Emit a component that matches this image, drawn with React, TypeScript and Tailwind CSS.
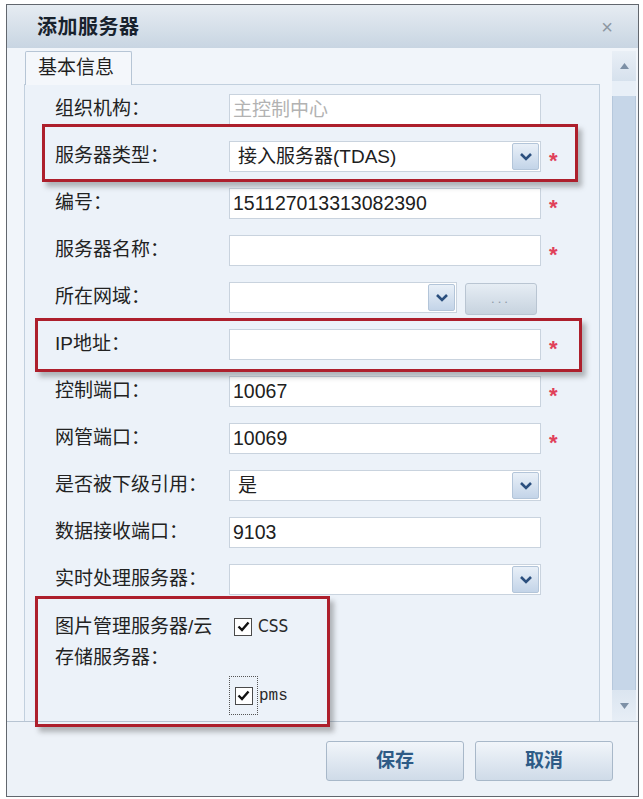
import React from "react";

type RowProps = {
  label: string;
  required?: boolean;
  children?: React.ReactNode;
  mark?: React.ReactNode;
};

const Chevron = () => (
  <svg width="14" height="10" viewBox="0 0 14 10">
    <path d="M2 2 L7 7 L12 2" fill="none" stroke="#2b4f7e" strokeWidth="2.6" />
  </svg>
);

const Check = () => (
  <svg width="13" height="11" viewBox="0 0 13 11">
    <path d="M1.5 5.5 L5 9 L11.5 1.5" fill="none" stroke="#111" strokeWidth="2.4" />
  </svg>
);

const Row = ({ label, required, children, mark }: RowProps) => (
  <div className="relative flex items-center h-[31px]">
    {mark}
    <div className="w-[204px] pl-[30px] shrink-0 text-[19px] text-[#222]">{label}</div>
    {children}
    {required && (
      <span className="ml-[8px] text-[22px] font-bold text-[#e0405a] leading-none mt-[8px]">*</span>
    )}
  </div>
);

const TextBox = ({ value, muted }: { value?: string; muted?: boolean }) => (
  <div
    className={
      muted
        ? "w-[312px] h-[31px] border border-[#c9d3de] bg-white pl-[3px] text-[19px] leading-[29px] text-[#b2b2b2]"
        : "w-[312px] h-[31px] border border-[#c9d3de] bg-white pl-[3px] text-[19.5px] leading-[29px] text-[#202020]"
    }
  >
    {value}
  </div>
);

const Select = ({ value, width = "w-[312px]" }: { value?: string; width?: string }) => (
  <div className={`${width} h-[31px] border border-[#c9d3de] bg-white flex`}>
    <div className="flex-1 pl-[8px] text-[19px] leading-[29px] text-[#202020]">{value}</div>
    <div className="w-[27px] my-[1px] mr-[1px] flex items-center justify-center bg-gradient-to-b from-[#e9f0f8] to-[#c3d4e8] border border-[#b3c5d9] rounded-[2px]">
      <Chevron />
    </div>
  </div>
);

const RedMark = ({ box }: { box: string }) => (
  <div className={`absolute ${box} border-[3px] border-[#ad1f2c] shadow-[4px_5px_5px_rgba(60,60,60,0.35)] pointer-events-none z-10`} />
);

export default function App() {
  return (
    <div className="w-[643px] h-[799px] bg-white pt-[4px] pl-[6px] font-['Liberation_Sans','Noto_Sans_CJK_SC',sans-serif]">
      <div className="w-[633px] h-[793px] border border-[#62676e] bg-[#f1f5fa] flex flex-col">
        {/* title bar */}
        <div className="h-[43px] shrink-0 flex items-center justify-between pl-[30px] pr-[25px] bg-gradient-to-b from-[#e6ecf2] to-[#c8d5e2]">
          <span className="text-[20px] font-bold text-[#18222d] tracking-[0.5px]">添加服务器</span>
          <span className="text-[20px] text-[#8d97a2] leading-none">×</span>
        </div>

        <div className="flex h-[673px] pt-[3px]">
          <div className="flex flex-col pl-[17px] w-[593px]">
            {/* tab strip */}
            <div className="h-[33px] flex items-end">
              <div className="ml-[1px] w-[107px] h-[34px] -mb-[1px] z-10 border border-b-0 border-[#b6c5d5] bg-[#f4f7fb] rounded-t-[2px] pl-[12px] text-[19px] leading-[32px] text-[#1f1f1f]">
                基本信息
              </div>
            </div>

            {/* form panel */}
            <div className="flex-1 border border-b-0 border-[#c2d0de] bg-[#ecf2f9] pt-[9px] flex flex-col gap-[16px]">
              <Row label="组织机构：">
                <TextBox value="主控制中心" muted />
              </Row>
              <Row
                label="服务器类型："
                required
                mark={<RedMark box="left-[17px] -top-[17px] w-[536px] h-[58px]" />}
              >
                <Select value="接入服务器(TDAS)" />
              </Row>
              <Row label="编号：" required>
                <TextBox value="151127013313082390" />
              </Row>
              <Row label="服务器名称：" required>
                <TextBox />
              </Row>
              <Row label="所在网域：">
                <Select width="w-[228px]" />
                <div className="ml-[8px] mt-[3px] w-[72px] h-[32px] rounded-[3px] border border-[#b9c5d2] bg-gradient-to-b from-[#e6edf4] to-[#c7d3df] flex items-center justify-center text-[13px] tracking-[3px] text-[#8d9aa8]">
                  ...
                </div>
              </Row>
              <Row
                label="IP地址："
                required
                mark={<RedMark box="left-[10px] -top-[11px] w-[547px] h-[54px]" />}
              >
                <TextBox />
              </Row>
              <Row label="控制端口：" required>
                <TextBox value="10067" />
              </Row>
              <Row label="网管端口：" required>
                <TextBox value="10069" />
              </Row>
              <Row label="是否被下级引用：">
                <Select value="是" />
              </Row>
              <Row label="数据接收端口：">
                <TextBox value="9103" />
              </Row>
              <Row label="实时处理服务器：">
                <Select />
              </Row>

              {/* storage servers */}
              <div className="relative flex">
                <RedMark box="left-[10px] -top-[15px] w-[295px] h-[131px]" />
                <div className="w-[204px] pl-[30px] shrink-0 text-[19px] leading-[31px] text-[#222]">
                  <div>图片管理服务器/云</div>
                  <div>存储服务器：</div>
                </div>
                <div className="flex flex-col">
                  <div className="h-[31px] flex items-center pl-[5px]">
                    <div className="w-[18px] h-[18px] border border-[#4a4a4a] bg-white flex items-center justify-center">
                      <Check />
                    </div>
                    <span className="ml-[6px] text-[17px] text-[#2a2a2a] font-['Liberation_Sans_Narrow','DejaVu_Sans_Condensed',sans-serif]">
                      CSS
                    </span>
                  </div>
                  <div className="mt-[34px] flex items-center">
                    <div className="w-[29px] h-[39px] border border-dotted border-[#555] flex items-center justify-center">
                      <div className="w-[18px] h-[18px] border border-[#4a4a4a] bg-white flex items-center justify-center">
                        <Check />
                      </div>
                    </div>
                    <span className="ml-[1px] text-[16px] text-[#2a2a2a] font-['Liberation_Mono',monospace]">pms</span>
                  </div>
                </div>
              </div>
            </div>
          </div>

          {/* scrollbar */}
          <div className="ml-[12px] w-[24px] flex flex-col bg-[#e4ecf5]">
            <div className="h-[30px] flex items-center justify-center bg-gradient-to-b from-[#e9eff6] to-[#d6e1ed]">
              <svg width="9" height="6" viewBox="0 0 9 6">
                <path d="M0 6 L4.5 0 L9 6 Z" fill="#7d90a6" />
              </svg>
            </div>
            <div className="h-[15px] bg-[#e8eff7]" />
            <div className="flex-1 bg-[#c6d6e8] border-x border-[#b6c8dc]" />
            <div className="h-[31px] flex items-center justify-center bg-gradient-to-b from-[#dbe5f0] to-[#e7eef6]">
              <svg width="9" height="6" viewBox="0 0 9 6">
                <path d="M0 0 L4.5 6 L9 0 Z" fill="#7d90a6" />
              </svg>
            </div>
          </div>
        </div>

        {/* footer buttons */}
        <div className="flex-1 border-t border-[#b7c4d2] bg-[#edf2f8] flex justify-end items-start pt-[19px] pr-[25px] gap-[11px]">
          <button className="w-[138px] h-[40px] rounded-[3px] border border-[#a8b8c9] bg-gradient-to-b from-[#f1f5fa] to-[#cfdbe8] text-[19px] font-bold text-[#2e5b86]">
            保存
          </button>
          <button className="w-[138px] h-[40px] rounded-[3px] border border-[#a8b8c9] bg-gradient-to-b from-[#f1f5fa] to-[#cfdbe8] text-[19px] font-bold text-[#2e5b86]">
            取消
          </button>
        </div>
      </div>
    </div>
  );
}
